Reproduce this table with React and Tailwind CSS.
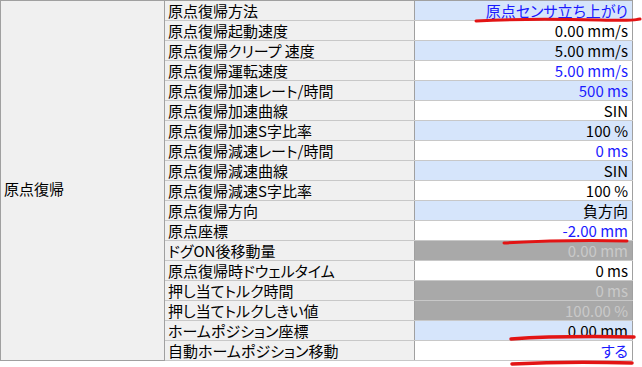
import React from "react";

const rows = [
  { label: "原点復帰方法", value: "原点センサ立ち上がり", tone: "blue", ink: "blue" },
  { label: "原点復帰起動速度", value: "0.00 mm/s", tone: "white", ink: "black" },
  { label: "原点復帰クリープ 速度", value: "5.00 mm/s", tone: "blue", ink: "black" },
  { label: "原点復帰運転速度", value: "5.00 mm/s", tone: "white", ink: "blue" },
  { label: "原点復帰加速レート/時間", value: "500 ms", tone: "blue", ink: "blue" },
  { label: "原点復帰加速曲線", value: "SIN", tone: "white", ink: "black" },
  { label: "原点復帰加速S字比率", value: "100 %", tone: "blue", ink: "black" },
  { label: "原点復帰減速レート/時間", value: "0 ms", tone: "white", ink: "blue" },
  { label: "原点復帰減速曲線", value: "SIN", tone: "blue", ink: "black" },
  { label: "原点復帰減速S字比率", value: "100 %", tone: "white", ink: "black" },
  { label: "原点復帰方向", value: "負方向", tone: "blue", ink: "black" },
  { label: "原点座標", value: "-2.00 mm", tone: "white", ink: "blue" },
  { label: "ドグON後移動量", value: "0.00 mm", tone: "gray", ink: "dim" },
  { label: "原点復帰時ドウェルタイム", value: "0 ms", tone: "white", ink: "black" },
  { label: "押し当てトルク時間", value: "0 ms", tone: "gray", ink: "dim" },
  { label: "押し当てトルクしきい値", value: "100.00 %", tone: "gray", ink: "dim" },
  { label: "ホームポジション座標", value: "0.00 mm", tone: "blue", ink: "black" },
  { label: "自動ホームポジション移動", value: "する", tone: "white", ink: "blue" },
];

const toneClass = {
  blue: "bg-[#d6e5fb]",
  white: "bg-white",
  gray: "bg-[#a9a9a9]",
};

const inkClass = {
  blue: "text-[#1a1aff]",
  black: "text-black",
  dim: "text-[#c9c9c9]",
};

function ParamRow({ row }) {
  return (
    <div className="flex h-[20px] border-b border-[#c8c8c8]">
      <div className="w-[250px] shrink-0 border-r border-[#a0a0a0] bg-[#f0f0f0] pl-[3px] flex items-center whitespace-nowrap">
        {row.label}
      </div>
      <div
        className={`w-[218px] shrink-0 border-r border-[#a0a0a0] pr-[4px] flex items-center justify-end whitespace-nowrap ${toneClass[row.tone]} ${inkClass[row.ink]}`}
      >
        {row.value}
      </div>
    </div>
  );
}

export default function App() {
  return (
    <div
      className="relative w-[642px] h-[367px] bg-white overflow-hidden text-[15px] leading-none text-black [font-feature-settings:'palt']"
      style={{ fontFamily: '"Noto Sans CJK JP", "Noto Sans", sans-serif' }}
    >
      <div className="flex w-[633px] border-t border-l border-[#a0a0a0]">
        <div className="w-[164px] shrink-0 bg-[#f0f0f0] border-r border-b border-[#a0a0a0] pl-[3px] pt-[16px] flex items-center">
          原点復帰
        </div>
        <div className="flex flex-col">
          {rows.map((row) => (
            <ParamRow key={row.label} row={row} />
          ))}
        </div>
      </div>

      {/* hand-drawn red marker strokes */}
      <svg
        className="absolute left-0 top-0 pointer-events-none"
        width="642"
        height="367"
        viewBox="0 0 642 367"
      >
        <g fill="none" stroke="#e31414" strokeLinecap="round" strokeWidth="3">
          <path d="M476 21 C 510 19, 560 19, 600 20 S 632 20, 640 19" />
          <path d="M504 243 C 540 241, 590 240, 627 241" />
          <path d="M511 339 C 540 337, 580 336, 634 337" strokeWidth="3.5" />
          <path d="M512 364 C 550 362, 600 362, 632 363" strokeWidth="3.5" />
        </g>
      </svg>
    </div>
  );
}
